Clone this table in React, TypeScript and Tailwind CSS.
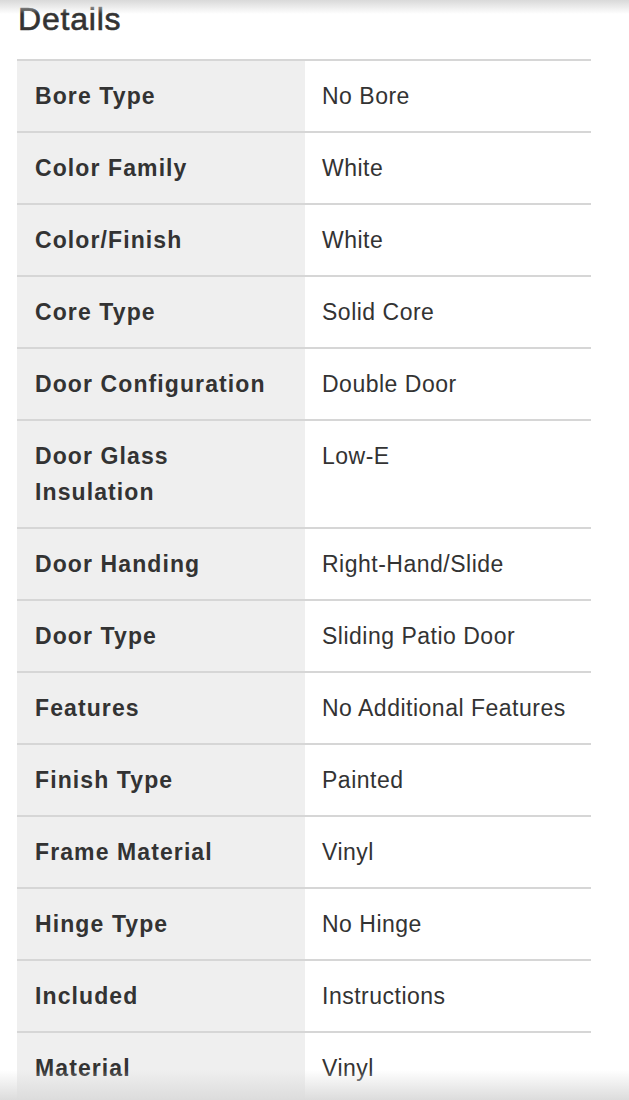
import React from "react";

const rows: [string, string][] = [
  ["Bore Type", "No Bore"],
  ["Color Family", "White"],
  ["Color/Finish", "White"],
  ["Core Type", "Solid Core"],
  ["Door Configuration", "Double Door"],
  ["Door Glass Insulation", "Low-E"],
  ["Door Handing", "Right-Hand/Slide"],
  ["Door Type", "Sliding Patio Door"],
  ["Features", "No Additional Features"],
  ["Finish Type", "Painted"],
  ["Frame Material", "Vinyl"],
  ["Hinge Type", "No Hinge"],
  ["Included", "Instructions"],
  ["Material", "Vinyl"],
];

export default function App() {
  return (
    <div className="relative h-[1100px] w-[629px] overflow-hidden bg-white font-['Liberation_Sans',Arial,sans-serif] text-[#333333]">
      <div className="pointer-events-none absolute left-0 top-0 h-[14px] w-full bg-gradient-to-b from-[#d9d9d9] to-transparent" />
      <div className="pl-[17px] pr-[38px]">
        <h2 className="h-[59px] pl-[1px] text-[32px] leading-[38px] tracking-[0.8px] text-[#333] [-webkit-text-stroke:0.6px_#333]">
          Details
        </h2>
        <div className="border-t-2 border-[#d6d6d6]">
          {rows.map(([k, v]) => (
            <div key={k} className="grid grid-cols-[288px_1fr] border-b-2 border-[#d6d6d6]">
              <div className="bg-[#efefef] px-[18px] py-[17px] text-[23px] font-bold leading-[36px] tracking-[1.1px] text-[#333]">
                {k === "Door Glass Insulation" ? (
                  <>
                    Door Glass
                    <br />
                    Insulation
                  </>
                ) : (
                  k
                )}
              </div>
              <div className="px-[17px] py-[17px] text-[23px] leading-[36px] tracking-[0.5px] text-[#333]">{v}</div>
            </div>
          ))}
        </div>
      </div>
      <div className="pointer-events-none absolute bottom-0 left-0 h-[30px] w-full bg-gradient-to-b from-transparent to-[#dcdcdc]" />
    </div>
  );
}
